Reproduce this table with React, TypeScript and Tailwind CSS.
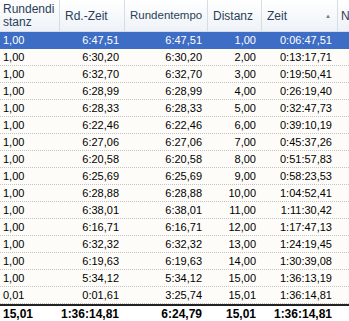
import React from "react";

const COLS = [
  { key: "dist", label: "Rundendi stanz", w: "w-[60px]", align: "left" },
  { key: "rdZeit", label: "Rd.-Zeit", w: "w-[65px]", align: "right" },
  { key: "tempo", label: "Rundentempo", w: "w-[83px]", align: "right" },
  { key: "distanz", label: "Distanz", w: "w-[54px]", align: "right" },
  { key: "zeit", label: "Zeit", w: "w-[76px]", align: "right" },
];

const ROWS = [
  ["1,00", "6:47,51", "6:47,51", "1,00", "0:06:47,51"],
  ["1,00", "6:30,20", "6:30,20", "2,00", "0:13:17,71"],
  ["1,00", "6:32,70", "6:32,70", "3,00", "0:19:50,41"],
  ["1,00", "6:28,99", "6:28,99", "4,00", "0:26:19,40"],
  ["1,00", "6:28,33", "6:28,33", "5,00", "0:32:47,73"],
  ["1,00", "6:22,46", "6:22,46", "6,00", "0:39:10,19"],
  ["1,00", "6:27,06", "6:27,06", "7,00", "0:45:37,26"],
  ["1,00", "6:20,58", "6:20,58", "8,00", "0:51:57,83"],
  ["1,00", "6:25,69", "6:25,69", "9,00", "0:58:23,53"],
  ["1,00", "6:28,88", "6:28,88", "10,00", "1:04:52,41"],
  ["1,00", "6:38,01", "6:38,01", "11,00", "1:11:30,42"],
  ["1,00", "6:16,71", "6:16,71", "12,00", "1:17:47,13"],
  ["1,00", "6:32,32", "6:32,32", "13,00", "1:24:19,45"],
  ["1,00", "6:19,63", "6:19,63", "14,00", "1:30:39,08"],
  ["1,00", "5:34,12", "5:34,12", "15,00", "1:36:13,19"],
  ["0,01", "0:01,61", "3:25,74", "15,01", "1:36:14,81"],
];

const TOTAL = ["15,01", "1:36:14,81", "6:24,79", "15,01", "1:36:14,81"];

export default function App() {
  return (
    <div
      className="w-[349px] h-[321px] overflow-hidden bg-white text-[11px] leading-none text-black"
      style={{ fontFamily: '"Liberation Sans", Arial, sans-serif' }}
    >
      {/* header */}
      <div className="flex h-[32px] bg-gradient-to-b from-white to-[#eef2f7] border-b border-[#d5dde6]">
        {COLS.map((c, i) => (
          <div
            key={c.key}
            className={`${c.w} shrink-0 border-r border-[#d5dde6] text-[#2b3f58] flex ${
              i === 0 ? "items-start pt-[3px] pl-[3px] leading-[13px] text-[12px]" : "items-center pl-[5px] text-[12px]"
            } relative`}
          >
            {i === 0 ? (
              <span className="w-[54px]">Rundendi<br />stanz</span>
            ) : (
              <span className={c.key === "tempo" ? "text-[11.5px]" : ""}>{c.label}</span>
            )}
            {c.key === "zeit" && (
              <span className="absolute right-[6px] top-[13px] text-[6px] text-[#6d7a8a]">▲</span>
            )}
          </div>
        ))}
        <div className="flex-1 flex items-center pl-[3px] text-[12px] text-[#2b3f58]">N</div>
      </div>

      {/* rows */}
      {ROWS.map((r, ri) => {
        const sel = ri === 0;
        return (
          <div
            key={ri}
            className={`flex h-[17px] ${
              sel ? "bg-[#3d6dc4] text-white" : "bg-[#fdfcf8] border-b border-dotted border-[#c4c4c4]"
            }`}
          >
            {COLS.map((c, ci) => (
              <div
                key={c.key}
                className={`${c.w} shrink-0 flex items-center ${
                  c.align === "left" ? "pl-[3px]" : "justify-end pr-[6px]"
                }`}
              >
                {r[ci]}
              </div>
            ))}
            <div className="flex-1" />
          </div>
        );
      })}

      {/* totals */}
      <div className="flex h-[17px] border-t-2 border-[#222] bg-white font-bold text-[12px]">
        {COLS.map((c, ci) => (
          <div
            key={c.key}
            className={`${c.w} shrink-0 flex items-center ${
              c.align === "left" ? "pl-[3px]" : "justify-end pr-[6px]"
            }`}
          >
            {TOTAL[ci]}
          </div>
        ))}
        <div className="flex-1" />
      </div>
    </div>
  );
}
